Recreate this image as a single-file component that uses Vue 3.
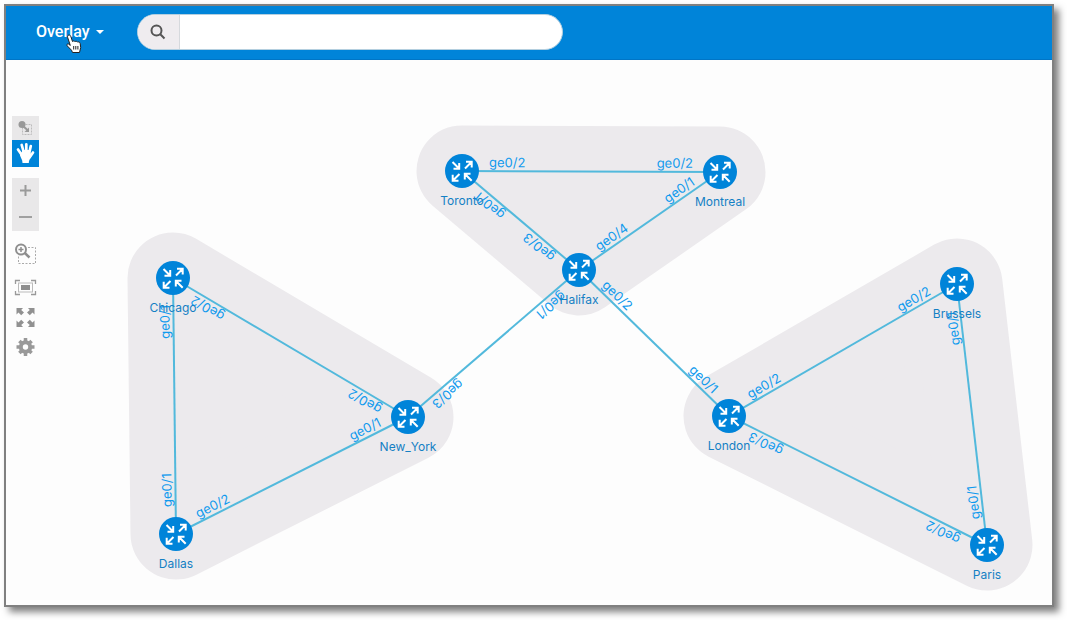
<script setup>
import { ref } from 'vue'

const query = ref('')

const nodes = {
  Toronto: [462, 171],
  Montreal: [720, 172],
  Halifax: [579, 270],
  Chicago: [173, 278],
  New_York: [408, 417],
  Dallas: [176, 534],
  London: [729, 416],
  Brussels: [957, 284],
  Paris: [987, 545],
}

const regions = [
  ['Toronto', 'Montreal', 'Halifax'],
  ['Chicago', 'New_York', 'Dallas'],
  ['London', 'Brussels', 'Paris'],
].map((names) => names.map((n) => nodes[n].join(',')).join(' '))

// Interface labels read along the link, from its first node to its second.
const links = [
  ['Toronto', 'ge0/2', 'Montreal', 'ge0/2'],
  ['Halifax', 'ge0/3', 'Toronto', 'ge0/1'],
  ['Halifax', 'ge0/4', 'Montreal', 'ge0/1'],
  ['Halifax', 'ge0/2', 'London', 'ge0/1'],
  ['Halifax', 'ge0/1', 'New_York', 'ge0/3'],
  ['New_York', 'ge0/2', 'Chicago', 'ge0/2'],
  ['Dallas', 'ge0/1', 'Chicago', 'ge0/1'],
  ['Dallas', 'ge0/2', 'New_York', 'ge0/1'],
  ['London', 'ge0/2', 'Brussels', 'ge0/2'],
  ['Paris', 'ge0/2', 'London', 'ge0/3'],
  ['Paris', 'ge0/1', 'Brussels', 'ge0/1'],
].map(([from, fromPort, to, toPort]) => {
  const [x1, y1] = nodes[from]
  const [x2, y2] = nodes[to]
  const angle = (Math.atan2(y2 - y1, x2 - x1) * 180) / Math.PI
  return {
    id: `${from}-${to}`,
    fromPort,
    toPort,
    length: Math.hypot(x2 - x1, y2 - y1),
    transform: `translate(${x1} ${y1}) rotate(${angle})`,
  }
})
</script>

<template>
  <div class="frame">
    <header class="topbar">
      <button class="view-menu" type="button" aria-haspopup="true">
        Overlay
        <svg class="caret" viewBox="0 0 8 4" aria-hidden="true"><path d="M0 0H8L4 4Z" /></svg>
        <svg class="pointer" viewBox="0 0 16 20" aria-hidden="true">
          <path d="M2 1.500C3 .6 4.200 1 4.700 2.100L6.500 7.500C7.200 6.700 8.500 6.800 9 7.700C9.800 7 11 7.200 11.500 8.100C12.600 7.600 14 8.200 14.200 9.500L14.700 13.500L13.500 18.500H6.500L5.500 16.200L1.200 11.800C.4 10.700 1.300 9.500 2.500 10L4.300 11.400L1.600 3.300C1.400 2.600 1.500 2 2 1.500Z" />
          <path d="M7.700 12V15.500M9.800 12V15.500M11.900 12V15.500" />
        </svg>
      </button>
      <form class="search" role="search" @submit.prevent>
        <button class="search-button" type="submit" aria-label="Search">
          <svg viewBox="0 0 16 16" aria-hidden="true">
            <circle cx="6.500" cy="6.500" r="5" />
            <path d="M10.300 10.300L14.500 14.500" />
          </svg>
        </button>
        <input v-model="query" class="search-input" type="text" aria-label="Search topology" />
      </form>
    </header>

    <main class="workspace">
      <nav class="tools" aria-label="Map tools">
        <div class="tool-group">
          <button class="tool" type="button" aria-label="Select">
            <svg viewBox="0 0 27 24" aria-hidden="true">
              <rect x="10.500" y="8.500" width="9" height="10" fill="none" stroke="#bcbcbc" stroke-dasharray="2 1" />
              <circle cx="10" cy="8.500" r="3.500" fill="#999" />
              <path d="M11 10L16 14.500" stroke="#999" stroke-width="2" />
              <path d="M17 11.500V16H12.500Z" fill="#999" />
            </svg>
          </button>
          <button class="tool tool-pan" type="button" aria-label="Pan" aria-pressed="true">
            <svg viewBox="0 0 27 27" aria-hidden="true">
              <path d="M6 9.500L10.500 16M9.700 5L12 13M14.300 4.300L14.300 13M18.800 6L17 14M21 12.500L17.500 17.500" fill="none" stroke="#fff" stroke-width="2.700" stroke-linecap="round" />
              <path d="M9 13L11 10H17.800L18.500 14L19.500 15.500L17 21L16.800 23H10.500L10.200 20.500L8 15.500Z" fill="#fff" />
            </svg>
          </button>
        </div>
        <div class="tool-group">
          <button class="tool" type="button" aria-label="Zoom in">
            <svg viewBox="0 0 27 26" aria-hidden="true"><path d="M8 12.500H19M13.500 7V18" stroke="#9a9a9a" stroke-width="2" /></svg>
          </button>
          <button class="tool" type="button" aria-label="Zoom out">
            <svg viewBox="0 0 27 27" aria-hidden="true"><path d="M7 13H20" stroke="#a0a0a0" stroke-width="2" /></svg>
          </button>
        </div>
        <div class="tool-list">
          <button class="tool" type="button" aria-label="Zoom to selection">
            <svg viewBox="0 0 27 33" aria-hidden="true">
              <path d="M16 8.500H23.500V24.500H6.500V17" fill="none" stroke="#aaa" stroke-dasharray="2 1.500" />
              <circle cx="9" cy="10.500" r="5" fill="none" stroke="#8e8e8e" stroke-width="2" />
              <path d="M6.500 10.500H11.500M9 8V13" stroke="#8e8e8e" stroke-width="1.500" />
              <path d="M12.800 14L17.500 18.500" stroke="#8e8e8e" stroke-width="2.500" />
            </svg>
          </button>
          <button class="tool" type="button" aria-label="Fit to window">
            <svg viewBox="0 0 27 30" aria-hidden="true">
              <path d="M8 8.500H3.500V12M19 8.500H23.500V12M8 22.500H3.500V19M19 22.500H23.500V19" fill="none" stroke="#999" stroke-width="1.300" />
              <rect x="6.500" y="11" width="14" height="9" fill="none" stroke="#bbb" />
              <rect x="9" y="13" width="9" height="5" fill="#8e8e8e" />
            </svg>
          </button>
          <button class="tool" type="button" aria-label="Full screen">
            <svg viewBox="0 0 27 30" aria-hidden="true">
              <path id="corner" d="M4.500 6H11L9.200 8L12 10.500L9.200 13.300L6.500 10.500L4.500 12.500Z" fill="#919191" />
              <use href="#corner" transform="translate(27 0) scale(-1 1)" />
              <use href="#corner" transform="translate(0 31) scale(1 -1)" />
              <use href="#corner" transform="translate(27 31) scale(-1 -1)" />
            </svg>
          </button>
          <button class="tool" type="button" aria-label="Settings">
            <svg viewBox="0 0 27 30" aria-hidden="true">
              <g transform="translate(13.500 15)">
                <circle r="4.700" fill="none" stroke="#999" stroke-width="4" />
                <path d="M0-9V-5M0 9V5M-9 0H-5M9 0H5M-6.100-6.100L-4-4M6.100 6.100L4 4M-6.100 6.100L-4 4M6.100-6.100L4-4" stroke="#999" stroke-width="3.500" />
              </g>
            </svg>
          </button>
        </div>
      </nav>

      <svg class="topology" viewBox="60 60 992 545" role="img" aria-label="Overlay topology">
        <polygon v-for="points in regions" :key="points" class="region" :points="points" />
        <g v-for="link in links" :key="link.id" :transform="link.transform">
          <line class="link" x1="0" y1="0" :x2="link.length" y2="0" />
          <text class="port" x="27" y="-4">{{ link.fromPort }}</text>
          <text class="port port-end" :x="link.length - 27" y="-4">{{ link.toPort }}</text>
        </g>
        <g v-for="([x, y], name) in nodes" :key="name" :transform="`translate(${x} ${y})`">
          <circle class="router" r="17" />
          <path
            class="arrows"
            d="M-9.500-9L-3.500-3M-2.800-8V-2.300H-8.500M3-2.500L9-8.500M4-9.200H9.700V-3.500M-2.500 3L-8.800 9.300M-9.300 3.800V9.700H-3.500M9.700 9.700L3.200 3.200M2.800 8.500V2.800H8.500"
          />
          <text class="name" y="34">{{ name }}</text>
        </g>
      </svg>
    </main>
  </div>
</template>

<style>
body {
  background: #fff;
}
</style>

<style scoped>
.frame {
  margin: 4px 13px 13px 4px;
  border: 2px solid #808080;
  background: #fdfdfd;
  box-shadow: 5px 5px 7px rgba(0, 0, 0, 0.5);
  font-family: Roboto, "Liberation Sans", sans-serif;
}

.topbar {
  display: flex;
  align-items: center;
  gap: 33px;
  box-sizing: border-box;
  height: 54px;
  padding: 0 30px 1px;
  background: #0084d9;
  border-bottom: 1px solid #0075c6;
}

.view-menu {
  position: relative;
  display: flex;
  align-items: center;
  gap: 6px;
  padding: 0;
  border: 0;
  background: none;
  color: #fff;
  font: 500 16px/20px Roboto, "Liberation Sans", sans-serif;
}

.caret {
  width: 8px;
  height: 4px;
  fill: #fff;
}

.pointer {
  position: absolute;
  left: 30px;
  top: 12px;
  width: 16px;
  height: 20px;
  fill: #fff;
  stroke: #222;
}

.search {
  display: flex;
  flex: 0 1 426px;
  box-sizing: border-box;
  height: 36px;
  overflow: hidden;
  border: 1px solid #b4cfdf;
  border-radius: 18px;
  background: #fff;
}

.search-button {
  display: grid;
  place-items: center;
  flex: none;
  width: 42px;
  padding: 0;
  border: 0;
  border-right: 1px solid #d6d9dd;
  background: #efecef;
}

.search-button svg {
  width: 16px;
  height: 16px;
  fill: none;
  stroke: #555;
  stroke-width: 2;
}

.search-input {
  flex: 1;
  min-width: 0;
  padding: 0 12px;
  border: 0;
  outline: 0;
  background: none;
  font: 16px Roboto, "Liberation Sans", sans-serif;
}

.workspace {
  display: flex;
  align-items: flex-start;
}

.tools {
  display: flex;
  flex: none;
  flex-direction: column;
  gap: 11px;
  box-sizing: border-box;
  width: 54px;
  padding: 56px 21px 0 6px;
}

.tool-group {
  background: #e9e8e9;
}

.tool-list {
  margin-top: -3px;
}

.tool {
  display: block;
  width: 27px;
  padding: 0;
  border: 0;
  background: none;
}

.tool svg {
  display: block;
  width: 100%;
}

.tool-pan {
  background: #0084d9;
}

.topology {
  flex: 1;
  min-width: 0;
  display: block;
  font-family: Inter, "Liberation Sans", sans-serif;
}

.region {
  fill: #eceaed;
  stroke: #eceaed;
  stroke-width: 91px;
  stroke-linejoin: round;
}

.link {
  stroke: #52b9dc;
  stroke-width: 2px;
}

.port {
  fill: #109aee;
  font-size: 13px;
}

.port-end {
  text-anchor: end;
}

.router {
  fill: #0084d9;
}

.arrows {
  fill: none;
  stroke: #fff;
  stroke-width: 2px;
}

.name {
  fill: #1480c4;
  font-size: 12px;
  text-anchor: middle;
}
</style>
